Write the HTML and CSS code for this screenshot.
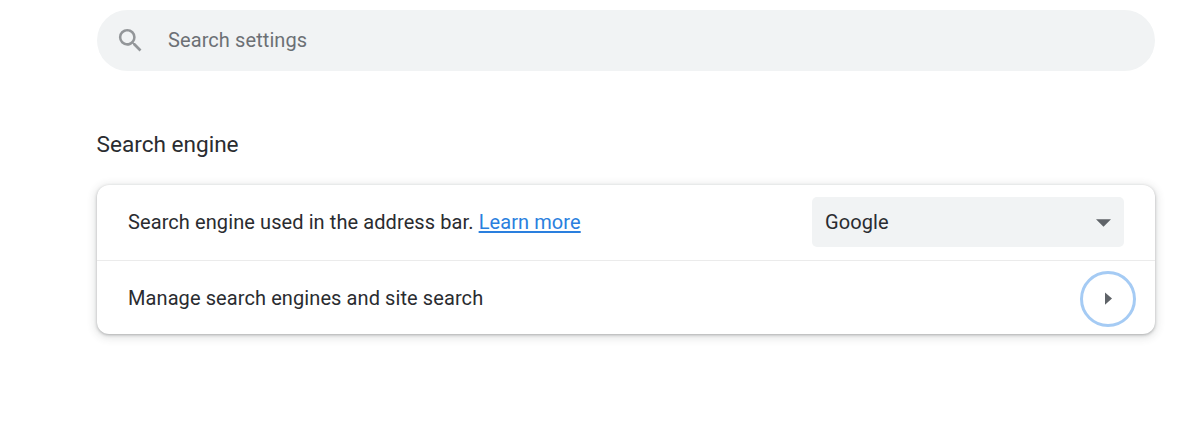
FILE: index.html
```html
<!DOCTYPE html>
<html lang="en">
<head>
<meta charset="utf-8">
<title>Settings</title>
<link rel="stylesheet" href="styles.css">
</head>
<body>
<main class="page">
  <div class="search">
    <svg class="search-icon" viewBox="0 0 24 24"><path d="M15.5 14h-.79l-.28-.27A6.47 6.47 0 0 0 16 9.5 6.5 6.5 0 1 0 9.5 16c1.61 0 3.09-.59 4.23-1.57l.27.28v.79l5 4.99L20.49 19l-4.99-5zm-6 0C7.01 14 5 11.99 5 9.5S7.01 5 9.5 5 14 7.01 14 9.5 11.99 14 9.5 14z"/></svg>
    <span class="search-text">Search settings</span>
  </div>
  <h2 class="title">Search engine</h2>
  <section class="card">
    <div class="row row-first">
      <div class="label">Search engine used in the address bar. <a class="link" href="#">Learn more</a></div>
      <div class="select"><span>Google</span><svg class="caret" viewBox="0 0 16 8"><path d="M0 0h16L8 8z"/></svg></div>
    </div>
    <div class="row row-second">
      <div class="label">Manage search engines and site search</div>
      <div class="arrow"><svg class="arrow-icon" viewBox="0 0 8 14"><path d="M0 0l8 7-8 7z"/></svg></div>
    </div>
  </section>
</main>
</body>
</html>
```
FILE: styles.css
```css
* { box-sizing: border-box; }
body { margin: 0; background: #fff; color: #2a2c30; font-family: Roboto, sans-serif; font-size: 20px; line-height: 30px; letter-spacing: 0.09px; }
.page { height: 434px; padding: 9.5px 45px 0 96.5px; }
.search { height: 61.5px; border-radius: 31px; background: #f1f3f4; display: flex; align-items: center; padding-left: 18.5px; color: #6c7074; }
.search-icon { width: 31px; height: 31px; fill: #939699; margin-right: 22px; }
.search-text { padding-bottom: 1px; }
.title { margin: 58px 0 0; height: 56px; font-size: 22.6px; line-height: 32px; font-weight: 400; letter-spacing: 0; }
.card { height: 149px; border-radius: 12px; box-shadow: 0 1px 3px rgba(60,64,67,.35), 0 2px 8px 2px rgba(60,64,67,.14); }
.row { display: flex; align-items: center; justify-content: space-between; padding-left: 31.5px; }
.row-first { height: 76px; padding-right: 31px; padding-bottom: 0.5px; border-bottom: 1px solid #ebebeb; }
.row-first .label { padding-bottom: 1px; }
.row-second { height: 75px; padding-right: 19px; }
.row-second .label { padding-bottom: 1px; }
.link { color: #2a7fde; text-decoration-thickness: 2px; text-underline-offset: 2px; }
.select { width: 312px; height: 50px; border-radius: 5px; background: #f1f3f4; display: flex; align-items: center; justify-content: space-between; padding: 0 13px; }
.select span { padding-bottom: 1px; }
.caret { width: 15px; height: 8px; fill: #5f6368; margin-top: 1px; }
.arrow { width: 56px; height: 56px; border: 3px solid #a5cbf4; border-radius: 50%; display: flex; align-items: center; justify-content: center; }
.arrow-icon { width: 7px; height: 13px; fill: #5f6368; margin-left: 1px; }
```
